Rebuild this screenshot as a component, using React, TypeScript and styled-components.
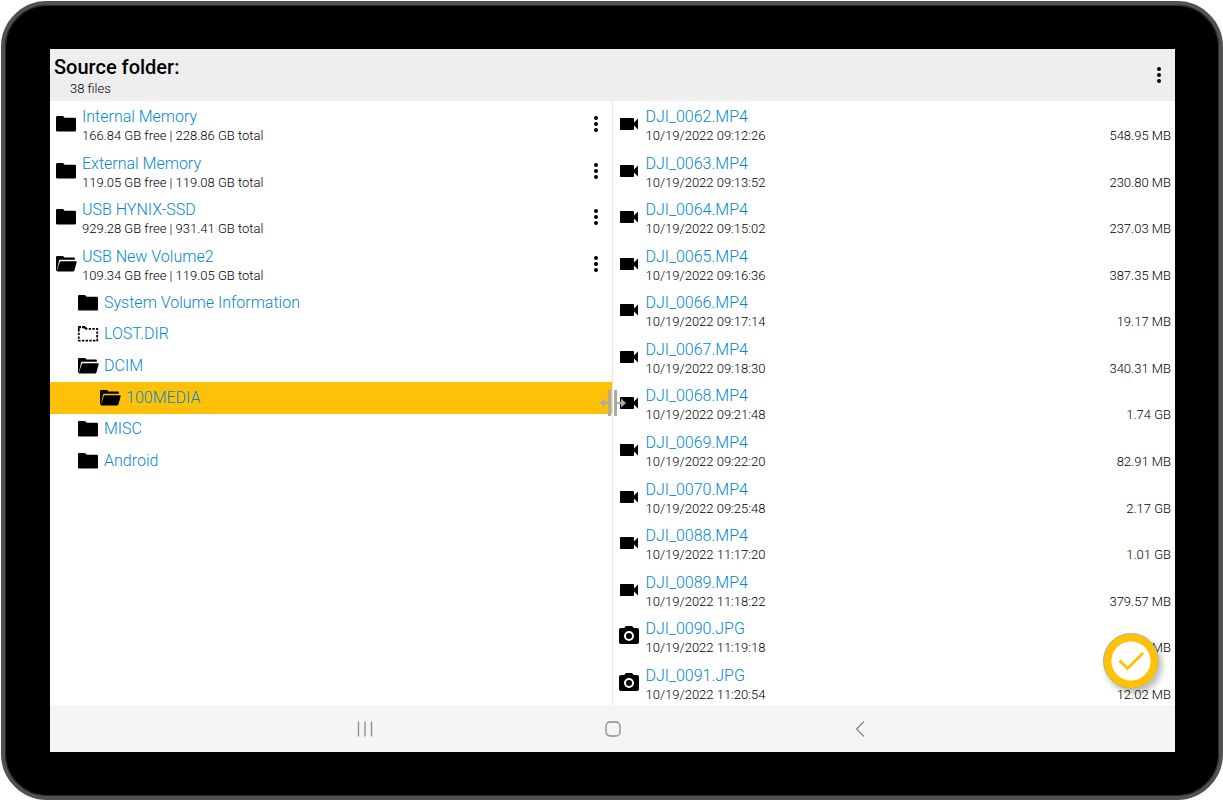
import React from "react";
import styled, { createGlobalStyle } from "styled-components";

const GlobalStyle = createGlobalStyle`
  * { box-sizing: border-box; }
  body { margin: 0; background: #fff; font-family: Roboto, "Liberation Sans", sans-serif; color: #000; }
  ul { list-style: none; margin: 0; padding: 0; }
  svg { display: block; }
`;

const Page = styled.div`
  display: flex;
  height: 100vh;
  min-height: 480px;
  padding: 1px 0 0 1px;
`;

const Device = styled.div`
  flex: 1;
  min-width: 0;
  display: flex;
  padding: 44px 44px 44px 45px;
  border: 4px solid #505252;
  border-radius: 46px;
  background: #000;
  box-shadow: inset 0 0 0 1px #2a2c2b;
`;

const Screen = styled.div`
  position: relative;
  flex: 1;
  min-width: 0;
  display: flex;
  flex-direction: column;
  background: #fff;
`;

const Header = styled.header`
  flex: none;
  display: flex;
  align-items: center;
  justify-content: space-between;
  height: 52px;
  padding: 0 4px;
  background: #eee;
`;

const Heading = styled.div`
  padding-top: 4px;
`;

const Title = styled.h1`
  margin: 0;
  font-size: 20px;
  line-height: 24px;
  font-weight: 500;
`;

const FileCount = styled.p`
  margin: 0 0 0 16px;
  font-size: 13px;
  line-height: 20px;
  font-weight: 300;
`;

const Panes = styled.main`
  position: relative;
  flex: 1;
  min-height: 0;
  display: grid;
  grid-template-columns: 1fr 1fr;
`;

const Pane = styled.section`
  min-width: 0;
  overflow: hidden;
  &:first-child { border-right: 1px solid #e6e6e6; }
`;

const Rows = styled.ul<{ $height: number }>`
  display: grid;
  grid-auto-rows: 1fr;
  height: ${(p) => p.$height}px;
`;

const Row = styled.li<{ $inset: number; $selected?: boolean }>`
  display: flex;
  align-items: center;
  gap: 5px;
  padding-left: ${(p) => p.$inset}px;
  padding-right: 4px;
  background: ${(p) => (p.$selected ? "#ffc107" : "transparent")};
`;

const RowText = styled.div`
  flex: 1;
  min-width: 0;
  padding-top: 4px;
`;

const Name = styled.a`
  display: block;
  font-size: 16px;
  line-height: 20px;
  font-weight: 300;
  color: #0288d1;
  text-decoration: none;
  white-space: nowrap;
`;

const Detail = styled.div`
  display: flex;
  justify-content: space-between;
  font-size: 13px;
  line-height: 18px;
  font-weight: 300;
  white-space: nowrap;
`;

const IconButton = styled.button`
  display: grid;
  place-items: center;
  width: 24px;
  height: 24px;
  padding: 0;
  border: 0;
  background: none;
  cursor: pointer;
`;

const Splitter = styled.button`
  position: absolute;
  left: 50%;
  top: 50%;
  transform: translate(-50%, -50%);
  padding: 0;
  border: 0;
  background: none;
  cursor: col-resize;
`;

const Confirm = styled.button`
  position: absolute;
  right: 16px;
  bottom: 16px;
  display: grid;
  place-items: center;
  width: 56px;
  height: 56px;
  padding: 0;
  border: 1px solid #a3b98a;
  border-radius: 50%;
  background: radial-gradient(circle, #fff 19px, #ffc107 20px);
  box-shadow: 3px 4px 6px rgba(0, 0, 0, 0.28);
  cursor: pointer;
`;

const NavBar = styled.nav`
  flex: none;
  display: grid;
  grid-template-columns: repeat(3, 22%);
  justify-content: center;
  justify-items: center;
  align-items: center;
  height: 47px;
  background: #f5f5f5;
`;

const Folder = () => (
  <svg width="22" height="16" viewBox="0 0 22 16" aria-hidden="true">
    <path d="M2.2 0H8l1.6 1.7h10.2q1.2 0 1.2 1.2v11.4q0 1.2-1.2 1.2H2.2Q1 15.5 1 14.3V1.2Q1 0 2.2 0z" />
  </svg>
);

const OpenFolder = () => (
  <svg width="22" height="16" viewBox="0 0 22 16" aria-hidden="true">
    <path d="M1 1.2Q1 0 2.2 0H8l1.6 1.6h9q1.4 0 1.4 1.4v.8H5.2q-.9 0-1.1.8L2.2 13 1.8 15Q1 14.7 1 14z" />
    <path d="M5.9 5.3h15q1.1 0 .8 1l-2.3 8.1q-.3 1.1-1.4 1.1H2.4q-.7 0-.5-.7l2.8-8.6q.3-.9 1.2-.9z" />
  </svg>
);

const DashedFolder = () => (
  <svg width="22" height="16" viewBox="0 0 22 16" aria-hidden="true">
    <path
      d="M1.8 3v11.7h18.4V2.8H9.5"
      fill="none"
      stroke="#000"
      strokeWidth="1.8"
      strokeDasharray="2.4 1.3"
    />
    <path d="M1 3V1.2Q1 0 2.2 0H4v2.2H2.6V3zM5 0h2.8l1.4 1.6H10v2H8.2L7 2.2H5z" />
  </svg>
);

const Video = () => (
  <svg width="24" height="24" viewBox="0 0 24 24" aria-hidden="true">
    <path d="M17 10.5V7c0-.55-.45-1-1-1H4c-.55 0-1 .45-1 1v10c0 .55.45 1 1 1h12c.55 0 1-.45 1-1v-3.5l4 4v-11l-4 4z" />
  </svg>
);

const Camera = () => (
  <svg width="24" height="24" viewBox="0 0 24 24" aria-hidden="true">
    <path
      fillRule="evenodd"
      d="M9 2L7.17 4H4c-1.1 0-2 .9-2 2v12c0 1.1.9 2 2 2h16c1.1 0 2-.9 2-2V6c0-1.1-.9-2-2-2h-3.17L15 2H9zM12 7a5 5 0 1 0 0 10 5 5 0 0 0 0-10z"
    />
    <circle cx="12" cy="12" r="3" />
  </svg>
);

const Kebab = () => (
  <svg width="6" height="18" viewBox="0 0 6 18" aria-hidden="true">
    <circle cx="3" cy="3" r="2" />
    <circle cx="3" cy="9" r="2" />
    <circle cx="3" cy="15" r="2" />
  </svg>
);

const volumes = [
  { name: "Internal Memory", detail: "166.84 GB free | 228.86 GB total" },
  { name: "External Memory", detail: "119.05 GB free | 119.08 GB total" },
  { name: "USB HYNIX-SSD", detail: "929.28 GB free | 931.41 GB total" },
  { name: "USB New Volume2", detail: "109.34 GB free | 119.05 GB total", open: true },
];

const folders = [
  { name: "System Volume Information", level: 1, Icon: Folder },
  { name: "LOST.DIR", level: 1, Icon: DashedFolder },
  { name: "DCIM", level: 1, Icon: OpenFolder },
  { name: "100MEDIA", level: 2, Icon: OpenFolder, selected: true },
  { name: "MISC", level: 1, Icon: Folder },
  { name: "Android", level: 1, Icon: Folder },
];

const files = [
  ["DJI_0062.MP4", "10/19/2022 09:12:26", "548.95 MB"],
  ["DJI_0063.MP4", "10/19/2022 09:13:52", "230.80 MB"],
  ["DJI_0064.MP4", "10/19/2022 09:15:02", "237.03 MB"],
  ["DJI_0065.MP4", "10/19/2022 09:16:36", "387.35 MB"],
  ["DJI_0066.MP4", "10/19/2022 09:17:14", "19.17 MB"],
  ["DJI_0067.MP4", "10/19/2022 09:18:30", "340.31 MB"],
  ["DJI_0068.MP4", "10/19/2022 09:21:48", "1.74 GB"],
  ["DJI_0069.MP4", "10/19/2022 09:22:20", "82.91 MB"],
  ["DJI_0070.MP4", "10/19/2022 09:25:48", "2.17 GB"],
  ["DJI_0088.MP4", "10/19/2022 11:17:20", "1.01 GB"],
  ["DJI_0089.MP4", "10/19/2022 11:18:22", "379.57 MB"],
  ["DJI_0090.JPG", "10/19/2022 11:19:18", "MB"],
  ["DJI_0091.JPG", "10/19/2022 11:20:54", "12.02 MB"],
];

export default function App() {
  return (
    <>
      <GlobalStyle />
      <Page>
        <Device>
          <Screen>
            <Header>
              <Heading>
                <Title>Source folder:</Title>
                <FileCount>38 files</FileCount>
              </Heading>
              <IconButton aria-label="More options">
                <Kebab />
              </IconButton>
            </Header>
            <Panes>
              <Pane aria-label="Folders">
                <Rows $height={186}>
                  {volumes.map((v) => (
                    <Row key={v.name} $inset={5}>
                      {v.open ? <OpenFolder /> : <Folder />}
                      <RowText>
                        <Name href="#">{v.name}</Name>
                        <Detail>{v.detail}</Detail>
                      </RowText>
                      <IconButton aria-label={`Options for ${v.name}`}>
                        <Kebab />
                      </IconButton>
                    </Row>
                  ))}
                </Rows>
                <Rows $height={190}>
                  {folders.map(({ name, level, Icon, selected }) => (
                    <Row key={name} $inset={5 + level * 22} $selected={selected}>
                      <Icon />
                      <Name href="#">{name}</Name>
                    </Row>
                  ))}
                </Rows>
              </Pane>
              <Pane aria-label="Files">
                <Rows $height={605}>
                  {files.map(([name, date, size]) => (
                    <Row key={name} $inset={4}>
                      {name.endsWith("JPG") ? <Camera /> : <Video />}
                      <RowText>
                        <Name href="#">{name}</Name>
                        <Detail>
                          <span>{date}</span>
                          <span>{size}</span>
                        </Detail>
                      </RowText>
                    </Row>
                  ))}
                </Rows>
              </Pane>
              <Splitter aria-label="Resize panes">
                <svg width="28" height="28" viewBox="0 0 28 28" fill="#aaa" aria-hidden="true">
                  <path d="M9 1h3v26H9zM15 1h3v26h-3zM9 13H6V9.5L1 14l5 4.5V15h3zM18 13h4V9.5l5 4.5-5 4.5V15h-4z" />
                </svg>
              </Splitter>
              <Confirm aria-label="Confirm">
                <svg width="28" height="22" viewBox="0 0 28 22" fill="none" stroke="#ffc107" strokeWidth="3" aria-hidden="true">
                  <path d="M2.5 10.5l8 8L26 3" />
                </svg>
              </Confirm>
            </Panes>
            <NavBar aria-label="System navigation">
              <IconButton aria-label="Recent apps">
                <svg width="16" height="16" viewBox="0 0 16 16" stroke="#8a8a8a" strokeWidth="1.3" aria-hidden="true">
                  <path d="M1.5 .5v15M8 .5v15M14.5 .5v15" />
                </svg>
              </IconButton>
              <IconButton aria-label="Home">
                <svg width="16" height="16" viewBox="0 0 16 16" fill="none" stroke="#8a8a8a" strokeWidth="1.3" aria-hidden="true">
                  <rect x="1" y="1" width="14" height="14" rx="4" />
                </svg>
              </IconButton>
              <IconButton aria-label="Back">
                <svg width="10" height="16" viewBox="0 0 10 16" fill="none" stroke="#8a8a8a" strokeWidth="1.3" aria-hidden="true">
                  <path d="M9 .5L1.500 8 9 15.500" />
                </svg>
              </IconButton>
            </NavBar>
          </Screen>
        </Device>
      </Page>
    </>
  );
}
